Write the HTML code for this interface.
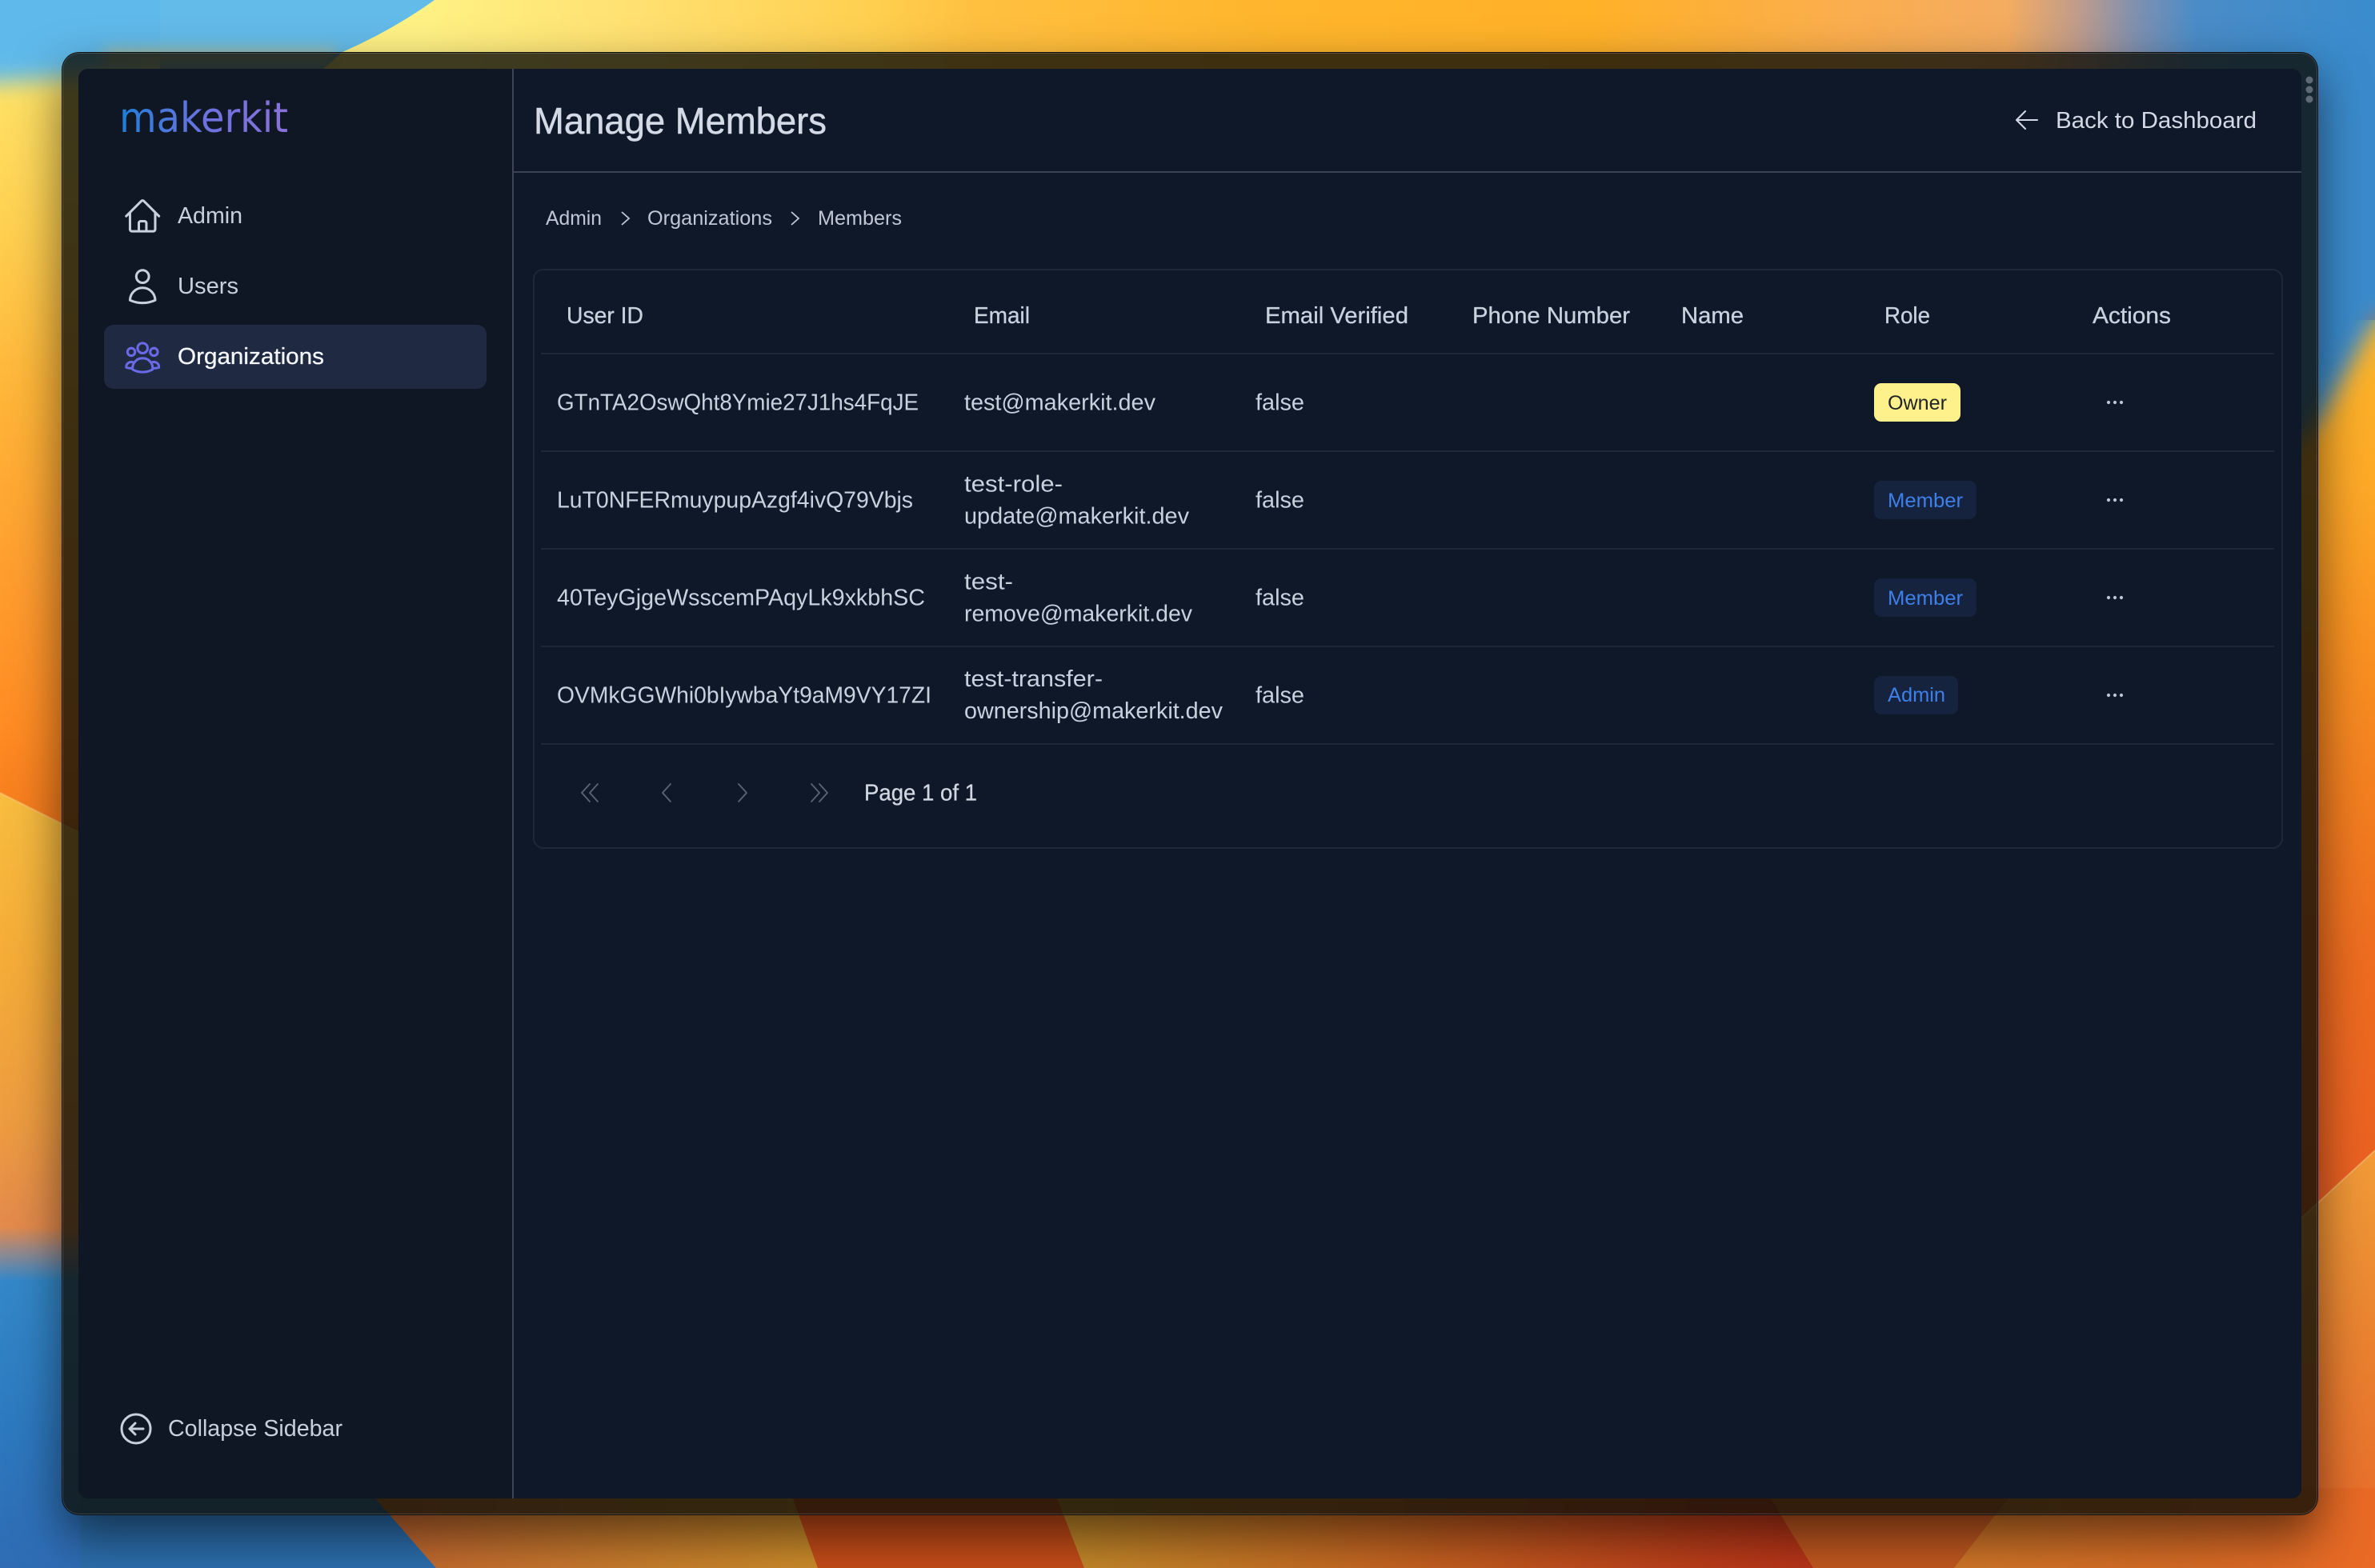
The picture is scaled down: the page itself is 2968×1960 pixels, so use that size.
<!DOCTYPE html>
<html lang="en"><head><meta charset="utf-8"><title>Manage Members</title>
<style>
html,body{margin:0;padding:0;width:2968px;height:1960px;overflow:hidden;background:#e08a30}
svg{position:absolute;left:0;top:0;display:block}
#frame{position:absolute;left:77px;top:65px;width:2820px;height:1829px;box-sizing:border-box;border-radius:22px;background:rgba(14,14,8,.8);border:1.5px solid rgba(8,10,14,.85);box-shadow:inset 0 0 0 1px rgba(255,255,255,.16),0 26px 60px rgba(0,0,0,.55)}
text{font-family:"Liberation Sans",sans-serif;font-size:29px;fill:#c8d1de;white-space:pre}
.m{stroke:#c8d1de;stroke-width:.3px}
.bc{font-size:25px;fill:#c0c8d5}
.nav{fill:#c8d0dc}
.bd{font-size:25px;fill:#3f7fe8}
.ic{fill:none;stroke:#c8d0dc;stroke-width:1.45;stroke-linecap:round;stroke-linejoin:round}
</style></head><body>
<svg width="2968" height="1960" viewBox="0 0 2968 1960" xmlns="http://www.w3.org/2000/svg">
<defs>
<linearGradient id="top" gradientUnits="userSpaceOnUse" x1="0" y1="0" x2="2968" y2="0">
<stop offset=".18" stop-color="#fff184"/><stop offset=".27" stop-color="#ffe070"/><stop offset=".37" stop-color="#ffcf4f"/><stop offset=".41" stop-color="#ffc040"/><stop offset=".54" stop-color="#ffb52c"/><stop offset=".67" stop-color="#ffb128"/><stop offset=".775" stop-color="#fbae4d"/><stop offset=".845" stop-color="#f4ac60"/><stop offset=".875" stop-color="#c09c8c"/><stop offset=".9" stop-color="#7e90b0"/><stop offset=".925" stop-color="#4a8cc8"/><stop offset="1" stop-color="#3a8ccd"/>
</linearGradient>
<linearGradient id="lt" gradientUnits="userSpaceOnUse" x1="0" y1="86" x2="0" y2="1040">
<stop offset="0" stop-color="#ffe468"/><stop offset=".2" stop-color="#ffd152"/><stop offset=".43" stop-color="#ffb538"/><stop offset=".65" stop-color="#ff9f30"/><stop offset=".86" stop-color="#ff8c24"/><stop offset="1" stop-color="#f57a1c"/>
</linearGradient>
<linearGradient id="lb" gradientUnits="userSpaceOnUse" x1="0" y1="991" x2="0" y2="1960">
<stop offset="0" stop-color="#f8bd40"/><stop offset=".22" stop-color="#f5ac38"/><stop offset=".42" stop-color="#ee9c40"/><stop offset=".56" stop-color="#e38a4c"/><stop offset=".59" stop-color="#9a8a8a"/><stop offset=".63" stop-color="#3388c9"/><stop offset=".83" stop-color="#2d78bf"/><stop offset="1" stop-color="#2f6cb4"/>
</linearGradient>
<linearGradient id="rt" gradientUnits="userSpaceOnUse" x1="0" y1="400" x2="0" y2="1520">
<stop offset="0" stop-color="#fbb52a"/><stop offset=".18" stop-color="#feaa28"/><stop offset=".36" stop-color="#fa9222"/><stop offset=".54" stop-color="#f37e20"/><stop offset=".72" stop-color="#ee6c20"/><stop offset="1" stop-color="#ea5f22"/>
</linearGradient>
<linearGradient id="rb" gradientUnits="userSpaceOnUse" x1="0" y1="1440" x2="0" y2="1960">
<stop offset="0" stop-color="#f29c38"/><stop offset=".5" stop-color="#ea8030"/><stop offset="1" stop-color="#e8682a"/>
</linearGradient>
<linearGradient id="g1" gradientUnits="userSpaceOnUse" x1="480" y1="0" x2="1020" y2="0"><stop offset="0" stop-color="#c46830"/><stop offset="1" stop-color="#cc8c2a"/></linearGradient>
<linearGradient id="g2" gradientUnits="userSpaceOnUse" x1="1330" y1="0" x2="2260" y2="0"><stop offset="0" stop-color="#c48a2a"/><stop offset=".4" stop-color="#c66822"/><stop offset=".85" stop-color="#bc3e1a"/><stop offset="1" stop-color="#b83418"/></linearGradient>
<linearGradient id="g3" gradientUnits="userSpaceOnUse" x1="2440" y1="0" x2="2968" y2="0"><stop offset="0" stop-color="#d07628"/><stop offset=".55" stop-color="#d86c26"/><stop offset="1" stop-color="#ea6a25"/></linearGradient>
<filter id="b14" filterUnits="userSpaceOnUse" x="-200" y="-200" width="3400" height="2400"><feGaussianBlur stdDeviation="14"/></filter>
<filter id="b10" filterUnits="userSpaceOnUse" x="-100" y="-100" width="900" height="400"><feGaussianBlur stdDeviation="9"/></filter>
</defs>
<rect width="2968" height="1960" fill="#c87a30"/>
<rect x="0" y="0" width="2968" height="90" fill="url(#top)"/>
<rect x="0" y="86" width="100" height="960" fill="url(#lt)"/>
<polygon points="0,991 100,1041 100,1960 0,1960" fill="url(#lb)"/>
<line x1="0" y1="991" x2="100" y2="1041" stroke="#fbd080" stroke-opacity=".5" stroke-width="2"/>
<rect x="2870" y="400" width="98" height="1120" fill="url(#rt)"/>
<polygon points="2968,1438 2870,1528 2870,1960 2968,1960" fill="url(#rb)"/>
<line x1="2968" y1="1438" x2="2870" y2="1528" stroke="#fbc880" stroke-opacity=".55" stroke-width="2"/>
<polygon points="2790,60 3040,60 3040,360 2968,400 2898,525 2820,600 2790,600" fill="#3a8bcc" filter="url(#b14)"/>
<path d="M-100,-100L300,-100L300,78L77,98L-100,108Z" fill="#5fb9ea" filter="url(#b14)"/>
<path d="M200,0L543,0Q490,38 428,65L400,90L200,90Z" fill="#63bbe9"/>
<rect x="130" y="62" width="290" height="20" fill="#e6c060" opacity=".55" filter="url(#b10)"/>
<!-- bottom strip -->
<polygon points="0,1860 458,1860 545,1960 0,1960" fill="#2c6ead"/>
<polygon points="458,1860 986,1860 1022,1960 545,1960" fill="url(#g1)"/>
<polygon points="986,1860 1316,1860 1355,1960 1022,1960" fill="#c64c18"/>
<polygon points="1316,1860 2205,1860 2266,1960 1355,1960" fill="url(#g2)"/>
<polygon points="2205,1860 2520,1860 2442,1960 2266,1960" fill="#c25820"/>
<polygon points="2520,1860 2968,1860 2968,1960 2442,1960" fill="url(#g3)"/>
<polygon points="0,1600 100,1620 100,1960 0,1960" fill="url(#lb)"/>
</svg>

<div id="frame"></div>

<svg width="2968" height="1960" viewBox="0 0 2968 1960" xmlns="http://www.w3.org/2000/svg">
<defs>
<linearGradient id="logo" gradientUnits="userSpaceOnUse" x1="149" y1="0" x2="360" y2="0"><stop offset="0" stop-color="#1d7ed6"/><stop offset=".3" stop-color="#4f78dc"/><stop offset=".5" stop-color="#6b72e0"/><stop offset="1" stop-color="#8a72d8"/></linearGradient>
</defs>
<rect x="98" y="86" width="2778" height="1787" rx="12" fill="#0e1828"/>
<path d="M110,86H641V1873H110A12,12 0 0 1 98,1861V98A12,12 0 0 1 110,86Z" fill="#0f1725"/>
<rect x="640" y="86" width="2" height="1787" fill="#3d4554"/>
<rect x="641" y="214" width="2235" height="2" fill="#3a4252"/>
<circle cx="2886" cy="100" r="4.5" fill="#5f6a74"/><circle cx="2886" cy="112" r="4.5" fill="#5f6a74"/><circle cx="2886" cy="124" r="4.5" fill="#5f6a74"/>

<!-- sidebar -->
<text x="149" y="165" style="font-family:'DejaVu Sans',sans-serif;font-size:52px;fill:url(#logo)" textLength="211" lengthAdjust="spacingAndGlyphs">makerkit</text>
<rect x="130" y="406" width="478" height="80" rx="12" fill="#1f2942"/>
<g transform="translate(153,245) scale(2.1)" class="ic"><path d="m2.25 12 8.954-8.955c.44-.439 1.152-.439 1.591 0L21.75 12M4.5 9.75v10.125c0 .621.504 1.125 1.125 1.125H9.75v-4.875c0-.621.504-1.125 1.125-1.125h2.25c.621 0 1.125.504 1.125 1.125V21h4.125c.621 0 1.125-.504 1.125-1.125V9.75M8.25 21h8.25"/></g>
<g transform="translate(153,333) scale(2.1)" class="ic"><path d="M15.75 6a3.75 3.75 0 1 1-7.5 0 3.75 3.75 0 0 1 7.5 0ZM4.501 20.118a7.5 7.5 0 0 1 14.998 0A17.933 17.933 0 0 1 12 21.75c-2.676 0-5.216-.584-7.499-1.632Z"/></g>
<g transform="translate(153,421) scale(2.1)" class="ic" style="stroke:#6a6ae6"><path d="M18 18.72a9.094 9.094 0 0 0 3.741-.479 3 3 0 0 0-4.682-2.72m.94 3.198.001.031c0 .225-.012.447-.037.666A11.944 11.944 0 0 1 12 21c-2.17 0-4.207-.576-5.963-1.584A6.062 6.062 0 0 1 6 18.719m12 0a5.971 5.971 0 0 0-.941-3.197m0 0A5.995 5.995 0 0 0 12 12.75a5.995 5.995 0 0 0-5.058 2.772m0 0a3 3 0 0 0-4.681 2.72 8.986 8.986 0 0 0 3.74.477m.94-3.197a5.971 5.971 0 0 0-.94 3.197M15 6.75a3 3 0 1 1-6 0 3 3 0 0 1 6 0Zm6 2.25a2.25 2.25 0 1 1-4.5 0 2.25 2.25 0 0 1 4.5 0Zm-13.5 0a2.25 2.25 0 1 1-4.5 0 2.25 2.25 0 0 1 4.5 0Z"/></g>
<text class="nav" x="222" y="279" textLength="81" lengthAdjust="spacingAndGlyphs">Admin</text>
<text class="nav" x="222" y="367" textLength="76" lengthAdjust="spacingAndGlyphs">Users</text>
<text x="222" y="455" textLength="183" lengthAdjust="spacingAndGlyphs" style="fill:#f4f6fa;stroke:#f4f6fa;stroke-width:.3px">Organizations</text>

<circle cx="170" cy="1786" r="18" fill="none" stroke="#c8d0dc" stroke-width="3"/>
<path d="M179,1786H162M169,1779L162,1786L169,1793" fill="none" stroke="#c8d0dc" stroke-width="3" stroke-linecap="round" stroke-linejoin="round"/>
<text class="nav" x="210" y="1795" textLength="218" lengthAdjust="spacingAndGlyphs">Collapse Sidebar</text>

<!-- header -->
<text x="667" y="167" style="font-size:46px;fill:#d3dae6;stroke:#d3dae6;stroke-width:.5px" textLength="366" lengthAdjust="spacingAndGlyphs">Manage Members</text>
<path d="M2546,150H2521M2531,139L2520,150L2531,161" fill="none" stroke="#d3dae6" stroke-width="2" stroke-linecap="round" stroke-linejoin="round"/>
<text x="2569" y="160" style="fill:#d3dae6" textLength="251" lengthAdjust="spacingAndGlyphs">Back to Dashboard</text>

<!-- breadcrumb -->
<text class="bc" x="682" y="281" textLength="70" lengthAdjust="spacingAndGlyphs">Admin</text>
<path d="M777,265L786,273L777,281" fill="none" stroke="#c0c8d5" stroke-width="1.8"/>
<text class="bc" x="809" y="281" textLength="156" lengthAdjust="spacingAndGlyphs">Organizations</text>
<path d="M989,265L998,273L989,281" fill="none" stroke="#c0c8d5" stroke-width="1.8"/>
<text class="bc" x="1022" y="281" textLength="105" lengthAdjust="spacingAndGlyphs">Members</text>

<!-- table -->
<rect x="667" y="337" width="2185" height="723" rx="12" fill="none" stroke="#1e2737" stroke-width="2"/>
<rect x="676" y="441" width="2166" height="2" fill="#1e2737"/>
<rect x="676" y="563" width="2166" height="2" fill="#1e2737"/>
<rect x="676" y="685" width="2166" height="2" fill="#1e2737"/>
<rect x="676" y="807" width="2166" height="2" fill="#1e2737"/>
<rect x="676" y="929" width="2166" height="2" fill="#1e2737"/>

<text class="m" x="708" y="404" textLength="96" lengthAdjust="spacingAndGlyphs">User ID</text>
<text class="m" x="1217" y="404" textLength="70" lengthAdjust="spacingAndGlyphs">Email</text>
<text class="m" x="1581" y="404" textLength="179" lengthAdjust="spacingAndGlyphs">Email Verified</text>
<text class="m" x="1840" y="404" textLength="197" lengthAdjust="spacingAndGlyphs">Phone Number</text>
<text class="m" x="2101" y="404" textLength="78" lengthAdjust="spacingAndGlyphs">Name</text>
<text class="m" x="2355" y="404" textLength="57" lengthAdjust="spacingAndGlyphs">Role</text>
<text class="m" x="2615" y="404" textLength="98" lengthAdjust="spacingAndGlyphs">Actions</text>

<text x="696" y="512.5" textLength="452" lengthAdjust="spacingAndGlyphs">GTnTA2OswQht8Ymie27J1hs4FqJE</text>
<text x="1205" y="512.5" textLength="239" lengthAdjust="spacingAndGlyphs">test@makerkit.dev</text>
<text x="1569" y="512.5" textLength="61" lengthAdjust="spacingAndGlyphs">false</text>

<text x="696" y="634.5" textLength="445" lengthAdjust="spacingAndGlyphs">LuT0NFERmuypupAzgf4ivQ79Vbjs</text>
<text x="1205" y="614.5" textLength="123" lengthAdjust="spacingAndGlyphs">test-role-</text>
<text x="1205" y="654.5" textLength="281" lengthAdjust="spacingAndGlyphs">update@makerkit.dev</text>
<text x="1569" y="634.5" textLength="61" lengthAdjust="spacingAndGlyphs">false</text>

<text x="696" y="756.5" textLength="460" lengthAdjust="spacingAndGlyphs">40TeyGjgeWsscemPAqyLk9xkbhSC</text>
<text x="1205" y="736.5" textLength="61" lengthAdjust="spacingAndGlyphs">test-</text>
<text x="1205" y="776.5" textLength="285" lengthAdjust="spacingAndGlyphs">remove@makerkit.dev</text>
<text x="1569" y="756.5" textLength="61" lengthAdjust="spacingAndGlyphs">false</text>

<text x="696" y="878.5" textLength="468" lengthAdjust="spacingAndGlyphs">OVMkGGWhi0bIywbaYt9aM9VY17ZI</text>
<text x="1205" y="858" textLength="173" lengthAdjust="spacingAndGlyphs">test-transfer-</text>
<text x="1205" y="898" textLength="323" lengthAdjust="spacingAndGlyphs">ownership@makerkit.dev</text>
<text x="1569" y="878.5" textLength="61" lengthAdjust="spacingAndGlyphs">false</text>

<rect x="2342" y="479" width="108" height="48" rx="9" fill="#fef08a"/>
<text x="2359" y="512" style="font-size:25px;fill:#20242a" textLength="74" lengthAdjust="spacingAndGlyphs">Owner</text>
<rect x="2342" y="601" width="128" height="48" rx="9" fill="#15233f"/>
<text class="bd" x="2359" y="634" textLength="94" lengthAdjust="spacingAndGlyphs">Member</text>
<rect x="2342" y="723" width="128" height="48" rx="9" fill="#15233f"/>
<text class="bd" x="2359" y="756" textLength="94" lengthAdjust="spacingAndGlyphs">Member</text>
<rect x="2342" y="845" width="105" height="48" rx="9" fill="#15233f"/>
<text class="bd" x="2359" y="877" textLength="72" lengthAdjust="spacingAndGlyphs">Admin</text>

<g fill="#bcc5d2">
<circle cx="2635" cy="503" r="2.1"/><circle cx="2643" cy="503" r="2.1"/><circle cx="2651" cy="503" r="2.1"/>
<circle cx="2635" cy="625" r="2.1"/><circle cx="2643" cy="625" r="2.1"/><circle cx="2651" cy="625" r="2.1"/>
<circle cx="2635" cy="747" r="2.1"/><circle cx="2643" cy="747" r="2.1"/><circle cx="2651" cy="747" r="2.1"/>
<circle cx="2635" cy="869" r="2.1"/><circle cx="2643" cy="869" r="2.1"/><circle cx="2651" cy="869" r="2.1"/>
</g>

<!-- pagination -->
<g fill="none" stroke="#5a6474" stroke-width="1.8" stroke-linecap="round" stroke-linejoin="round">
<path d="M737,980L727,991L737,1002M747,980L737,991L747,1002"/>
<path d="M838,980L828,991L838,1002"/>
<path d="M923,980L933,991L923,1002"/>
<path d="M1014,980L1024,991L1014,1002M1024,980L1034,991L1024,1002"/>
</g>
<text x="1080" y="1000.5" style="fill:#d1d7e0;stroke:#d1d7e0;stroke-width:.3px" textLength="141" lengthAdjust="spacingAndGlyphs">Page 1 of 1</text>
</svg>
</body></html>
